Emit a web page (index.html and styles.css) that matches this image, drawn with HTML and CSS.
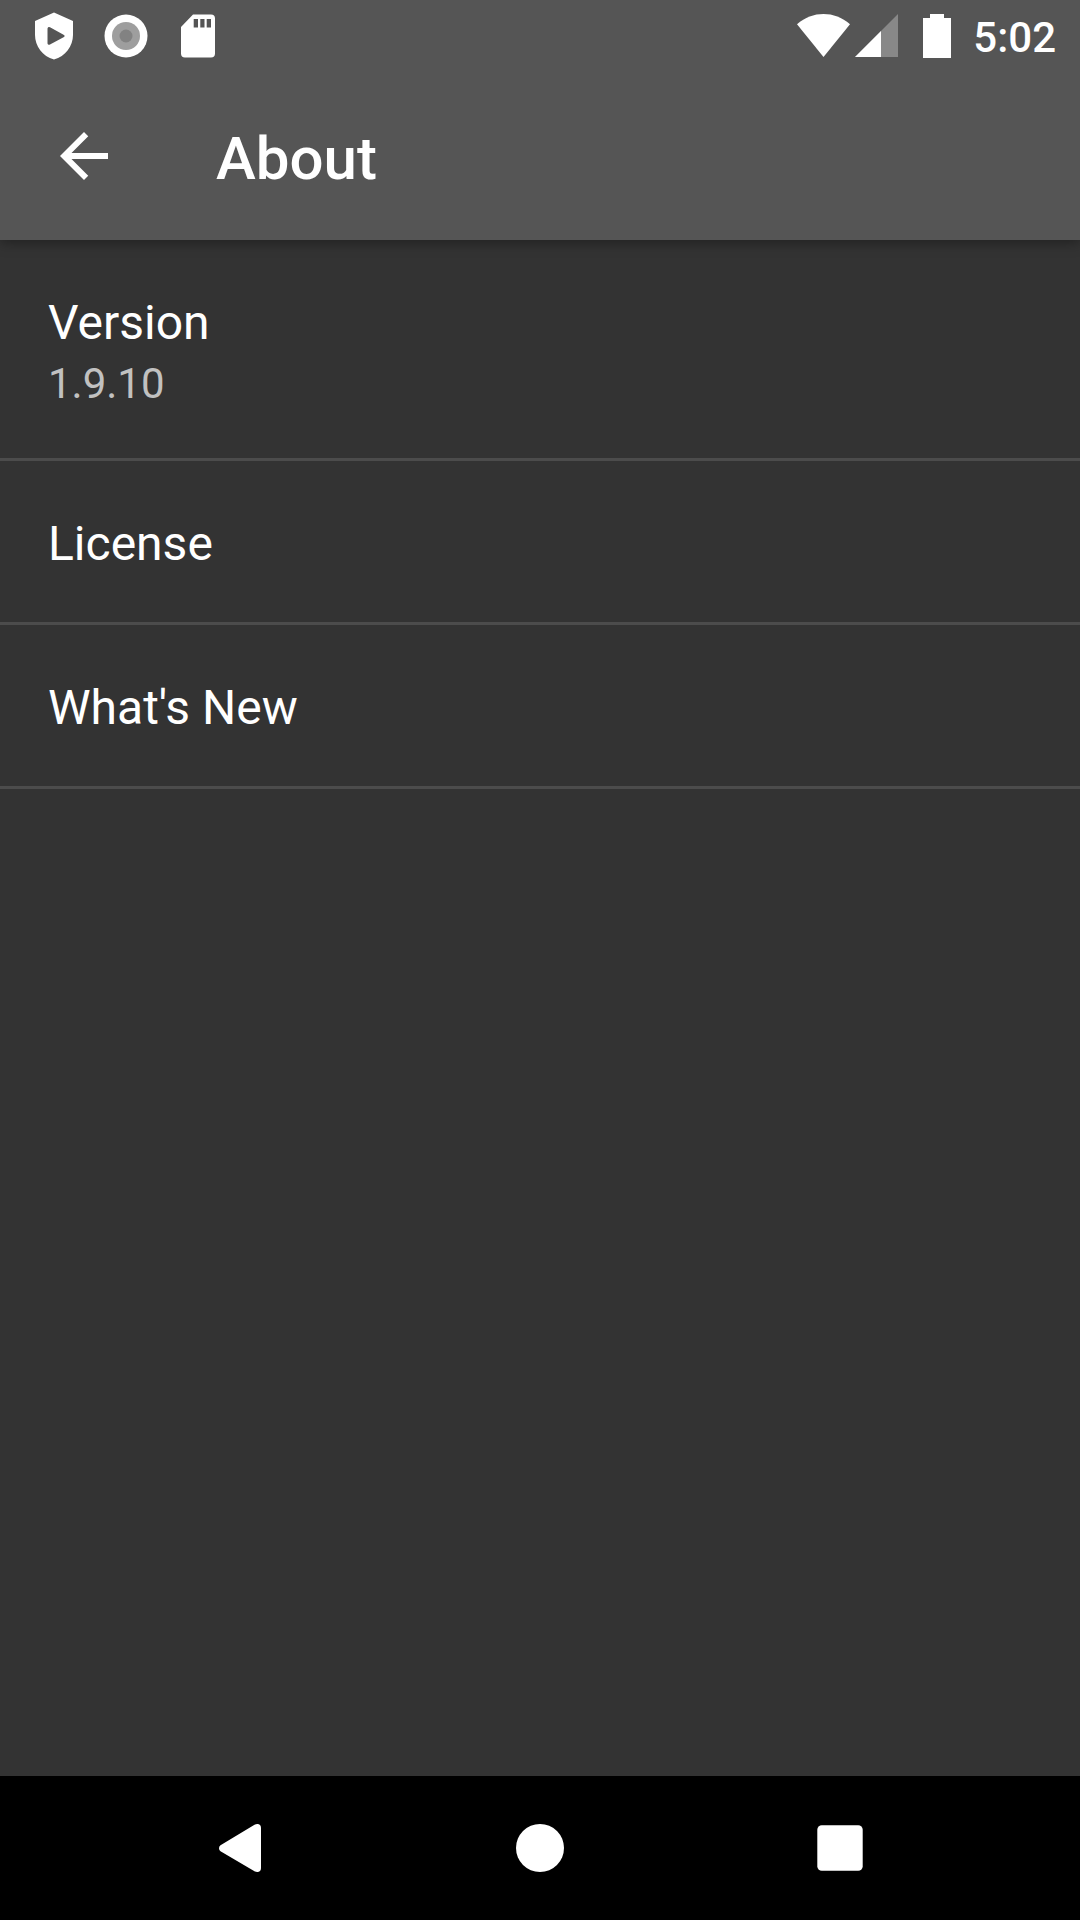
FILE: index.html
```html
<!DOCTYPE html>
<html lang="en">
<head>
<meta charset="utf-8">
<title>About</title>
<link rel="stylesheet" href="styles.css">
</head>
<body>
<div class="screen">
  <header class="header">
    <div class="status-bar">
      <div class="notifications">
        <svg class="icon" viewBox="0 0 72 72"><path fill="#fff" fill-rule="evenodd" d="M36 12.500 55 21V35C55 46 47.500 56.500 36 59.600C24.500 56.500 17 46 17 35V21ZM29.500 28.500V43.500Q30 45.400 32 44.500L46 37Q47.500 36 46 35L32 27.300Q30 26.600 29.500 28.500Z"/></svg>
        <svg class="icon" viewBox="0 0 72 72"><circle cx="36" cy="36" r="21.500" fill="#fff"/><circle cx="36" cy="36" r="14" fill="#9e9e9e"/><circle cx="36" cy="36" r="6.500" fill="#828282"/></svg>
        <svg class="icon" viewBox="0 0 72 72"><path fill="#fff" fill-rule="evenodd" d="M31 14.500H49Q53 14.500 53 18.500V53.500Q53 57.500 49 57.500H23Q19 57.500 19 53.500V27ZM31.700 19V27.500H36V19ZM38.300 19V27.500H42.500V19ZM44.700 19V27.500H49V19Z"/></svg>
      </div>
      <div class="system">
        <svg class="wifi" viewBox="0 0 54 72"><path fill="#fff" d="M27.500 57 1 24.300C9 17.200 18 14 27.500 14S46 17.200 54 24.300Z"/></svg>
        <svg class="signal" viewBox="0 0 43 72"><path fill="#888" d="M43 14V57H0Z"/><path fill="#fff" d="M26 31V57H0Z"/></svg>
        <svg class="battery" viewBox="0 0 28 72"><path fill="#fff" d="M7 14H21V18H28V58H0V18H7Z"/></svg>
        <span class="clock">5:02</span>
      </div>
    </div>
    <div class="toolbar">
      <svg class="back" viewBox="0 0 24 24"><path fill="#fff" d="M20 11H7.830l5.590-5.590L12 4l-8 8 8 8 1.410-1.410L7.830 13H20v-2z"/></svg>
      <h1 class="title">About</h1>
    </div>
  </header>
  <main class="list">
    <div class="row">
      <div class="label">Version</div>
      <div class="summary">1.9.10</div>
    </div>
    <div class="row"><div class="label">License</div></div>
    <div class="row"><div class="label">What's New</div></div>
  </main>
  <nav class="nav-bar">
    <svg class="nav-icon" viewBox="0 0 72 72"><path fill="#fff" d="M16.500 33.300 50.500 12.800Q52 11.800 54 12Q57 12.500 57 16V56Q57 59.500 54 60Q52 60.200 50.500 59.200L16.500 39.300Q15 38.300 15 36.300T16.500 33.300Z"/></svg>
    <svg class="nav-icon" viewBox="0 0 72 72"><circle cx="36" cy="36" r="24" fill="#fff"/></svg>
    <svg class="nav-icon" viewBox="0 0 72 72"><rect x="13.300" y="13.300" width="45.400" height="45.400" rx="4.500" fill="#fff"/></svg>
  </nav>
</div>
</body>
</html>
```
FILE: styles.css
```css
body {
  margin: 0;
  font-family: Roboto, sans-serif;
  color: #fff;
}

svg {
  display: block;
  flex: none;
}

.screen {
  display: flex;
  flex-direction: column;
  height: 1920px;
  width: 1080px;
  background: #333;
  overflow: hidden;
}

.header {
  height: 240px;
  background: #555;
  box-shadow: 0 3px 12px rgba(0, 0, 0, 0.35);
}

.status-bar {
  display: flex;
  justify-content: space-between;
  height: 72px;
  padding: 0 24px 0 18px;
}

.notifications,
.system {
  display: flex;
}

.icon {
  width: 72px;
  height: 72px;
}

.wifi {
  width: 54px;
  height: 72px;
  margin-right: 5px;
}

.signal {
  width: 43px;
  height: 72px;
  margin-right: 25px;
}

.battery {
  width: 28px;
  height: 72px;
  margin-right: 22px;
}

.clock {
  font-size: 42px;
  font-weight: 500;
  line-height: 76px;
}

.toolbar {
  display: flex;
  align-items: center;
  height: 168px;
  padding-left: 48px;
}

.back {
  width: 72px;
  height: 72px;
}

.title {
  margin: 5px 0 0 96px;
  font-size: 60px;
  font-weight: 500;
  line-height: 70px;
}

.row {
  padding: 55px 48px 50px;
  border-bottom: 3px solid #4c4c4c;
}

.label {
  font-size: 48px;
  line-height: 56px;
}

.summary {
  margin-top: 8px;
  font-size: 42px;
  line-height: 49px;
  color: #c1c1c1;
}

.list {
  flex: 1;
}

.nav-bar {
  display: flex;
  align-items: center;
  justify-content: center;
  gap: 228px;
  height: 144px;
  background: #000;
}

.nav-icon {
  width: 72px;
  height: 72px;
}
```
